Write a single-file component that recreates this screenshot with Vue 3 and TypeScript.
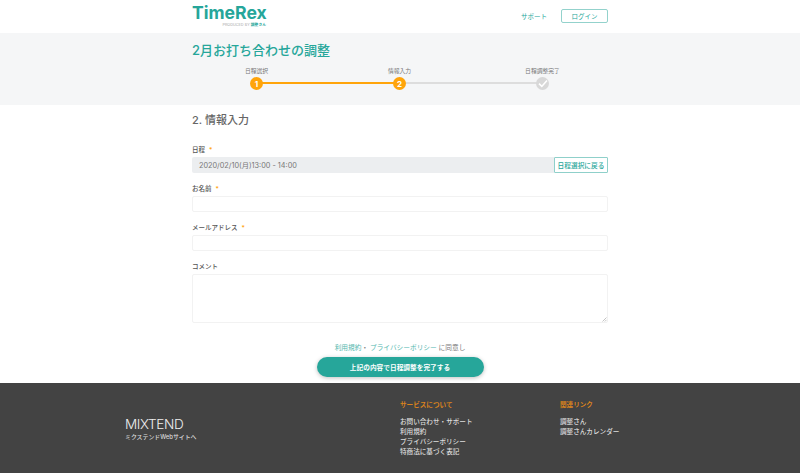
<script setup lang="ts">
const steps = [
  { label: '日程選択', mark: '1', state: 'done' },
  { label: '情報入力', mark: '2', state: 'done' },
  { label: '日程調整完了', mark: '', state: 'todo' },
]
const serviceLinks = ['お問い合わせ・サポート', '利用規約', 'プライバシーポリシー', '特商法に基づく表記']
const relatedLinks = ['調整さん', '調整さんカレンダー']
</script>

<template>
  <div class="page">
    <header class="topbar">
      <div class="wrap topbar-in">
        <div class="logo">
          <div class="logo-name">TimeRex</div>
          <div class="logo-sub">PRODUCED BY <b>調整さん</b></div>
        </div>
        <nav class="top-nav">
          <a class="top-link">サポート</a>
          <a class="login">ログイン</a>
        </nav>
      </div>
    </header>

    <section class="hero">
      <div class="wrap">
        <h1 class="title">2月お打ち合わせの調整</h1>
        <div class="steps">
          <div class="line">
            <div class="line-on"></div>
          </div>
          <div v-for="s in steps" :key="s.label" class="step">
            <span class="step-label">{{ s.label }}</span>
            <span class="dot" :class="s.state">
              <template v-if="s.mark">{{ s.mark }}</template>
              <svg v-else width="10" height="9" viewBox="0 0 10 9"><path d="M1 4.6 3.8 7.4 9 1.4" fill="none" stroke="#fff" stroke-width="1.6" /></svg>
            </span>
          </div>
        </div>
      </div>
    </section>

    <main class="wrap form">
      <h2 class="sub-title">2. 情報入力</h2>

      <div class="label first">日程<i>*</i></div>
      <div class="date-row">
        <span class="date-text">2020/02/10(月)13:00 - 14:00</span>
        <button class="back">日程選択に戻る</button>
      </div>

      <div class="label">お名前<i>*</i></div>
      <input class="field" type="text" />

      <div class="label">メールアドレス<i>*</i></div>
      <input class="field" type="text" />

      <div class="label">コメント</div>
      <div class="area-wrap">
        <textarea class="field area"></textarea>
        <svg class="grip" width="5" height="5" viewBox="0 0 5 5"><path d="M0.5 4.5 4.5 0.5M2.8 4.5 4.5 2.8" stroke="#b5b5b5" stroke-width="0.8" /></svg>
      </div>

      <p class="agree"><a>利用規約</a>・ <a>プライバシーポリシー</a> に同意し</p>
      <button class="submit">上記の内容で日程調整を完了する</button>
    </main>

    <footer class="footer">
      <div class="brand">
        <div class="brand-name">MIXTEND</div>
        <div class="brand-link">ミクステンドWebサイトへ</div>
      </div>
      <div class="col col-service">
        <div class="col-head">サービスについて</div>
        <a v-for="l in serviceLinks" :key="l">{{ l }}</a>
      </div>
      <div class="col">
        <div class="col-head">関連リンク</div>
        <a v-for="l in relatedLinks" :key="l">{{ l }}</a>
      </div>
    </footer>
  </div>
</template>

<style>
html, body { margin: 0; background: #fff; }
</style>

<style scoped>
.page { width: 800px; height: 473px; overflow: hidden; font-family: Inter, "Noto Sans CJK JP", sans-serif; color: #555; }
.wrap { width: 416px; margin: 0 auto; }
.topbar { height: 33px; }
.topbar-in { display: flex; justify-content: space-between; align-items: flex-start; }
.logo { padding-top: 3px; color: #26a69a; width: 74px; }
.logo-name { font-size: 17.6px; font-weight: 700; line-height: 19px; white-space: nowrap; }
.logo-sub { margin-top: 1px; font-size: 3.8px; line-height: 4px; color: #aaa; text-align: right; white-space: nowrap; }
.logo-sub b { color: #26a69a; }
.top-nav { display: flex; align-items: center; gap: 14px; padding-top: 9px; font-size: 6.5px; color: #26a69a; }
.login { width: 45px; height: 12px; border: 1px solid #93d2cc; border-radius: 2px; display: flex; align-items: center; justify-content: center; }
.hero { height: 72px; background: #f5f6f7; }
.title { margin: 0; padding-top: 8px; font-size: 13px; line-height: 18px; font-weight: 500; color: #26a69a; }
.steps { position: relative; width: 299px; margin: 8px 0 0 58px; height: 23px; display: flex; justify-content: space-between; }
.line { position: absolute; left: 6.5px; right: 6.5px; top: 15px; height: 2px; background: #ddd; }
.line-on { width: 50%; height: 100%; background: #ffa40a; }
.step { position: relative; width: 13px; display: flex; flex-direction: column; align-items: center; }
.step-label { font-size: 5.8px; line-height: 8px; white-space: nowrap; color: #777; margin-bottom: 2px; }
.dot { width: 13px; height: 13px; flex: none; border-radius: 50%; display: flex; align-items: center; justify-content: center; font-size: 8px; font-weight: 700; color: #fff; }
.dot.done { background: #ffa40a; }
.dot.todo { background: #d8d8d8; }
.form { height: 278px; }
.sub-title { margin: 0; padding-top: 8px; font-size: 11px; line-height: 14px; font-weight: 500; color: #666; }
.label { font-size: 6.5px; line-height: 9px; font-weight: 500; color: #555; margin-top: 12px; }
.label.first { margin-top: 19px; }
.label i { font-style: normal; color: #ffa40a; margin-left: 4px; }
.date-row { margin-top: 2px; height: 16px; background: #eceef0; border-radius: 2px; display: flex; align-items: center; justify-content: space-between; }
.date-text { padding-left: 7px; font-size: 7.3px; color: #777; }
.back { width: 54px; height: 16px; padding: 0; background: #fff; border: 1px solid #8fd0ca; border-radius: 1px; color: #26a69a; font: 500 6.7px Inter, "Noto Sans CJK JP", sans-serif; }
.field { display: block; box-sizing: border-box; width: 100%; height: 16px; margin: 2px 0 0; padding: 0; background: #fff; border: 1px solid #f2f2f2; border-radius: 2px; outline: none; }
.area-wrap { position: relative; }
.area { height: 49px; resize: none; }
.grip { position: absolute; right: 1px; bottom: 1px; }
.agree { margin: 21px 0 0; text-align: center; font-size: 6.7px; line-height: 9px; color: #777; }
.agree a { color: #26a69a; opacity: 0.8; }
.submit { display: block; width: 167px; height: 20px; margin: 4px auto 0; padding: 0; border: none; border-radius: 10px; background: #26a69a; color: #fff; font: 600 6.7px Inter, "Noto Sans CJK JP", sans-serif; box-shadow: 0 1px 4px rgba(0, 0, 0, 0.25); }
.footer { height: 90px; background: #434343; display: grid; grid-template-columns: 275px 160px 1fr; padding-left: 125px; color: #ddd; font-size: 6.6px; font-weight: 500; }
.brand { padding-top: 33px; }
.brand-name { font-size: 13.6px; line-height: 16px; color: #eee; letter-spacing: -0.4px; font-weight: 300; }
.brand-link { margin-top: 0; font-size: 5.9px; line-height: 9px; }
.col { padding-top: 17px; display: flex; flex-direction: column; line-height: 10px; }
.col-head { color: #d9821d; font-weight: 600; margin-bottom: 7px; }
</style>
